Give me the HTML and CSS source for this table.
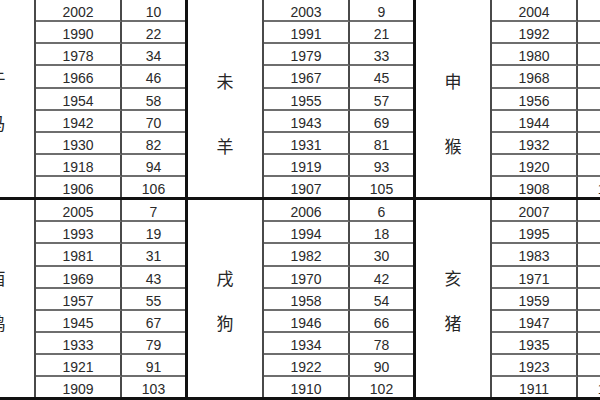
FILE: index.html
```html
<!DOCTYPE html>
<html lang="zh">
<head>
<meta charset="utf-8">
<link rel="stylesheet" href="styles.css">
</head>
<body>
<div class="sheet">
  <div class="block">
    <div class="group">
      <div class="label narrow"><span>午</span><span>马</span></div>
      <div class="cell">2002</div><div class="cell">10</div>
      <div class="cell">1990</div><div class="cell">22</div>
      <div class="cell">1978</div><div class="cell">34</div>
      <div class="cell">1966</div><div class="cell">46</div>
      <div class="cell">1954</div><div class="cell">58</div>
      <div class="cell">1942</div><div class="cell">70</div>
      <div class="cell">1930</div><div class="cell">82</div>
      <div class="cell">1918</div><div class="cell">94</div>
      <div class="cell">1906</div><div class="cell">106</div>
    </div>
    <div class="group">
      <div class="label wide"><span>未</span><span>羊</span></div>
      <div class="cell">2003</div><div class="cell">9</div>
      <div class="cell">1991</div><div class="cell">21</div>
      <div class="cell">1979</div><div class="cell">33</div>
      <div class="cell">1967</div><div class="cell">45</div>
      <div class="cell">1955</div><div class="cell">57</div>
      <div class="cell">1943</div><div class="cell">69</div>
      <div class="cell">1931</div><div class="cell">81</div>
      <div class="cell">1919</div><div class="cell">93</div>
      <div class="cell">1907</div><div class="cell">105</div>
    </div>
    <div class="group">
      <div class="label wide"><span>申</span><span>猴</span></div>
      <div class="cell">2004</div><div class="cell">8</div>
      <div class="cell">1992</div><div class="cell">20</div>
      <div class="cell">1980</div><div class="cell">32</div>
      <div class="cell">1968</div><div class="cell">44</div>
      <div class="cell">1956</div><div class="cell">56</div>
      <div class="cell">1944</div><div class="cell">68</div>
      <div class="cell">1932</div><div class="cell">80</div>
      <div class="cell">1920</div><div class="cell">92</div>
      <div class="cell">1908</div><div class="cell">104</div>
    </div>
  </div>
  <div class="block">
    <div class="group">
      <div class="label narrow"><span>酉</span><span>鸡</span></div>
      <div class="cell">2005</div><div class="cell">7</div>
      <div class="cell">1993</div><div class="cell">19</div>
      <div class="cell">1981</div><div class="cell">31</div>
      <div class="cell">1969</div><div class="cell">43</div>
      <div class="cell">1957</div><div class="cell">55</div>
      <div class="cell">1945</div><div class="cell">67</div>
      <div class="cell">1933</div><div class="cell">79</div>
      <div class="cell">1921</div><div class="cell">91</div>
      <div class="cell">1909</div><div class="cell">103</div>
    </div>
    <div class="group">
      <div class="label narrow"><span>戌</span><span>狗</span></div>
      <div class="cell">2006</div><div class="cell">6</div>
      <div class="cell">1994</div><div class="cell">18</div>
      <div class="cell">1982</div><div class="cell">30</div>
      <div class="cell">1970</div><div class="cell">42</div>
      <div class="cell">1958</div><div class="cell">54</div>
      <div class="cell">1946</div><div class="cell">66</div>
      <div class="cell">1934</div><div class="cell">78</div>
      <div class="cell">1922</div><div class="cell">90</div>
      <div class="cell">1910</div><div class="cell">102</div>
    </div>
    <div class="group">
      <div class="label narrow"><span>亥</span><span>猪</span></div>
      <div class="cell">2007</div><div class="cell">5</div>
      <div class="cell">1995</div><div class="cell">17</div>
      <div class="cell">1983</div><div class="cell">29</div>
      <div class="cell">1971</div><div class="cell">41</div>
      <div class="cell">1959</div><div class="cell">53</div>
      <div class="cell">1947</div><div class="cell">65</div>
      <div class="cell">1935</div><div class="cell">77</div>
      <div class="cell">1923</div><div class="cell">89</div>
      <div class="cell">1911</div><div class="cell">101</div>
    </div>
  </div>
</div>
</body>
</html>
```
FILE: styles.css
```css
html, body {
  margin: 0;
  padding: 0;
  background: #fff;
  overflow: hidden;
  width: 600px;
  height: 400px;
}
.sheet {
  margin-left: -40px;
  width: 700px;
}
.block {
  display: flex;
  border-bottom: 3px solid #111;
}
.group {
  flex: none;
  display: grid;
  grid-template-columns: 76px 86px 63px;
  grid-template-rows: repeat(8, 22.15px) 20px;
  border-right: 3px solid #111;
}
.label {
  grid-column: 1;
  grid-row: 1 / -1;
  border-right: 2px solid #4a4a4a;
  display: flex;
  flex-direction: column;
  align-items: center;
  font-family: "Noto Sans CJK SC", sans-serif;
  font-size: 17px;
  line-height: 20px;
  color: #262626;
}
.label.narrow {
  padding-top: 68px;
  gap: 25px;
}
.label.wide {
  padding-top: 71px;
  gap: 45px;
}
.cell {
  box-sizing: border-box;
  display: flex;
  align-items: center;
  justify-content: center;
  padding-top: 4px;
  font-family: "Liberation Sans", Arial, sans-serif;
  font-size: 14px;
  line-height: 1;
  color: #2a2a2a;
  border-bottom: 2px solid #6e6e6e;
}
.cell:nth-child(even) {
  border-right: 2px solid #4a4a4a;
}
.cell:nth-last-child(-n+2) {
  border-bottom: none;
}
```
